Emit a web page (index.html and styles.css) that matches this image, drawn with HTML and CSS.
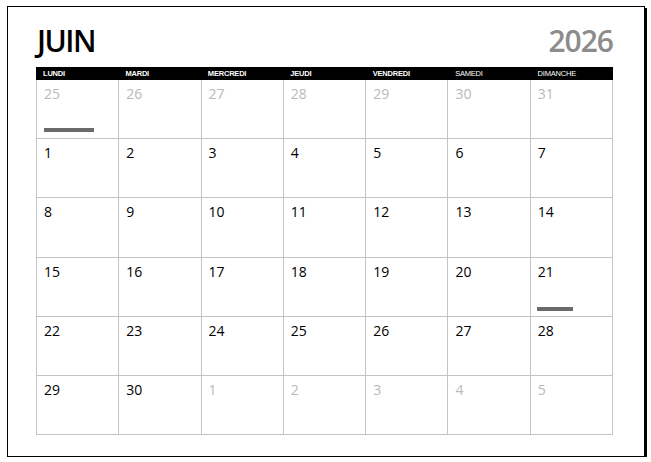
FILE: index.html
```html
<!DOCTYPE html>
<html lang="fr">
<head>
<meta charset="utf-8">
<link rel="stylesheet" href="styles.css">
</head>
<body>
<div class="page">
  <div class="title-row">
    <h1 class="month">JUIN</h1>
    <div class="year">2026</div>
  </div>
  <div class="calendar">
    <div class="weekdays">
      <div class="wd">LUNDI</div>
      <div class="wd">MARDI</div>
      <div class="wd">MERCREDI</div>
      <div class="wd">JEUDI</div>
      <div class="wd">VENDREDI</div>
      <div class="wd light">SAMEDI</div>
      <div class="wd light">DIMANCHE</div>
    </div>
    <div class="grid">
      <div class="cell muted"><span class="num">25</span><span class="bar bar-long"></span></div>
      <div class="cell muted"><span class="num">26</span></div>
      <div class="cell muted"><span class="num">27</span></div>
      <div class="cell muted"><span class="num">28</span></div>
      <div class="cell muted"><span class="num">29</span></div>
      <div class="cell muted"><span class="num">30</span></div>
      <div class="cell muted"><span class="num">31</span></div>

      <div class="cell"><span class="num">1</span></div>
      <div class="cell"><span class="num">2</span></div>
      <div class="cell"><span class="num">3</span></div>
      <div class="cell"><span class="num">4</span></div>
      <div class="cell"><span class="num">5</span></div>
      <div class="cell"><span class="num">6</span></div>
      <div class="cell"><span class="num">7</span></div>

      <div class="cell"><span class="num">8</span></div>
      <div class="cell"><span class="num">9</span></div>
      <div class="cell"><span class="num">10</span></div>
      <div class="cell"><span class="num">11</span></div>
      <div class="cell"><span class="num">12</span></div>
      <div class="cell"><span class="num">13</span></div>
      <div class="cell"><span class="num">14</span></div>

      <div class="cell"><span class="num">15</span></div>
      <div class="cell"><span class="num">16</span></div>
      <div class="cell"><span class="num">17</span></div>
      <div class="cell"><span class="num">18</span></div>
      <div class="cell"><span class="num">19</span></div>
      <div class="cell"><span class="num">20</span></div>
      <div class="cell"><span class="num">21</span><span class="bar bar-short"></span></div>

      <div class="cell"><span class="num">22</span></div>
      <div class="cell"><span class="num">23</span></div>
      <div class="cell"><span class="num">24</span></div>
      <div class="cell"><span class="num">25</span></div>
      <div class="cell"><span class="num">26</span></div>
      <div class="cell"><span class="num">27</span></div>
      <div class="cell"><span class="num">28</span></div>

      <div class="cell"><span class="num">29</span></div>
      <div class="cell"><span class="num">30</span></div>
      <div class="cell muted"><span class="num">1</span></div>
      <div class="cell muted"><span class="num">2</span></div>
      <div class="cell muted"><span class="num">3</span></div>
      <div class="cell muted"><span class="num">4</span></div>
      <div class="cell muted"><span class="num">5</span></div>
    </div>
  </div>
</div>
</body>
</html>
```

FILE: styles.css
```css
html, body {
  margin: 0;
  padding: 0;
  background: #fff;
}
body {
  font-family: "Open Sans", "DejaVu Sans", sans-serif;
  color: #000;
}
.page {
  box-sizing: border-box;
  margin: 6px 0 0 7px;
  width: 638px;
  height: 451px;
  border: 1px solid #000;
  box-shadow: 2px 2px 0 #000;
  padding: 14px 31px 0 28px;
}
.title-row {
  display: flex;
  justify-content: space-between;
  align-items: flex-start;
  height: 46px;
}
.month {
  margin: 0;
  font-size: 30px;
  line-height: 40px;
  font-weight: 600;
  letter-spacing: -1.5px;
  padding-left: 1px;
}
.year {
  font-size: 30px;
  line-height: 40px;
  font-weight: 600;
  color: #8c8c8c;
  letter-spacing: -1px;
}
.calendar {
  width: 577px;
}
.weekdays {
  display: grid;
  grid-template-columns: repeat(7, 1fr);
  background: #000;
  height: 13px;
}
.wd {
  color: #fff;
  font-family: "Liberation Sans Narrow", "Liberation Sans", sans-serif;
  font-size: 7.5px;
  font-weight: 700;
  line-height: 13px;
  padding-left: 7px;
  letter-spacing: -0.2px;
}
.wd.light {
  font-weight: 400;
}
.grid {
  display: grid;
  grid-template-columns: repeat(7, 1fr);
  grid-template-rows: repeat(6, 59.2px);
  border-left: 1px solid #c4c4c4;
}
.cell {
  position: relative;
  border-right: 1px solid #c4c4c4;
  border-bottom: 1px solid #c4c4c4;
  padding: 4px 0 0 7px;
}
.num {
  display: block;
  font-size: 14px;
  line-height: 20px;
  color: #000;
}
.muted .num {
  color: #b9b9b9;
}
.bar {
  display: block;
  height: 4px;
  background: #6b6b6b;
}
.bar-long {
  width: 50px;
  margin-top: 24px;
}
.bar-short {
  width: 36px;
  margin-top: 25px;
  margin-left: -1px;
}
```
